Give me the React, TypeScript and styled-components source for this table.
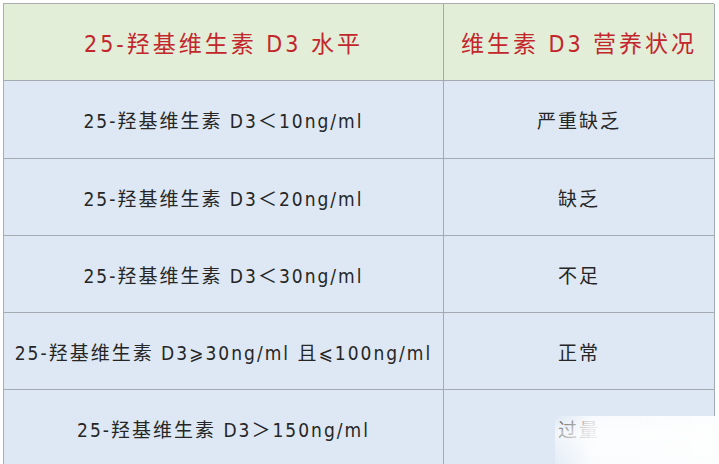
import React from "react";
import styled, { createGlobalStyle } from "styled-components";

const Global = createGlobalStyle`
  html, body { margin: 0; padding: 0; background: #ffffff; }
  body { font-family: "DejaVu Sans Condensed", "Noto Sans CJK SC", sans-serif; }
`;

const Page = styled.div`
  width: 719px;
  height: 464px;
  overflow: hidden;
  padding: 3px 0 0 3px;
  box-sizing: border-box;
  position: relative;
`;

const Table = styled.div`
  width: 711px;
  display: grid;
  grid-template-columns: 440px 271px;
  border-top: 1px solid #a9adb0;
  border-left: 1px solid #a9adb0;
  box-sizing: border-box;
`;

const Cell = styled.div<{ $head?: boolean; $h: number }>`
  height: ${(p) => p.$h}px;
  box-sizing: border-box;
  display: flex;
  align-items: center;
  justify-content: center;
  border-right: 1px solid #a3aab2;
  border-bottom: 1px solid #a3aab2;
  background: ${(p) => (p.$head ? "#e2eed8" : "#dde8f4")};
  color: ${(p) => (p.$head ? "#c3262b" : "#262626")};
  font-family: "DejaVu Sans Condensed", "Noto Sans CJK SC", sans-serif;
  font-size: ${(p) => (p.$head ? 23 : 19)}px;
  letter-spacing: ${(p) => (p.$head ? 3 : 2)}px;
  white-space: nowrap;
`;

const Fade = styled.div`
  position: absolute;
  left: 555px;
  top: 416px;
  width: 164px;
  height: 48px;
  background:
    linear-gradient(180deg, rgba(255,255,255,0) 0%, rgba(255,255,255,0.6) 35%, rgba(255,255,255,0.2) 100%),
    linear-gradient(90deg, rgba(255,255,255,0) 0%, rgba(255,255,255,0.8) 22%, rgba(255,255,255,0.92) 100%);
  pointer-events: none;
`;

const rows = [
  ["25-羟基维生素 D3＜10ng/ml", "严重缺乏"],
  ["25-羟基维生素 D3＜20ng/ml", "缺乏"],
  ["25-羟基维生素 D3＜30ng/ml", "不足"],
  ["25-羟基维生素 D3⩾30ng/ml 且⩽100ng/ml", "正常"],
  ["25-羟基维生素 D3＞150ng/ml", "过量"],
];

const heights = [78, 77, 77, 77, 77];

export default function App() {
  return (
    <Page>
      <Global />
      <Table>
        <Cell $head $h={77}>25-羟基维生素 D3 水平</Cell>
        <Cell $head $h={77}>维生素 D3 营养状况</Cell>
        {rows.map((r, i) => (
          <React.Fragment key={i}>
            <Cell $h={heights[i]}>{r[0]}</Cell>
            <Cell $h={heights[i]}>{r[1]}</Cell>
          </React.Fragment>
        ))}
      </Table>
      <Fade />
    </Page>
  );
}
